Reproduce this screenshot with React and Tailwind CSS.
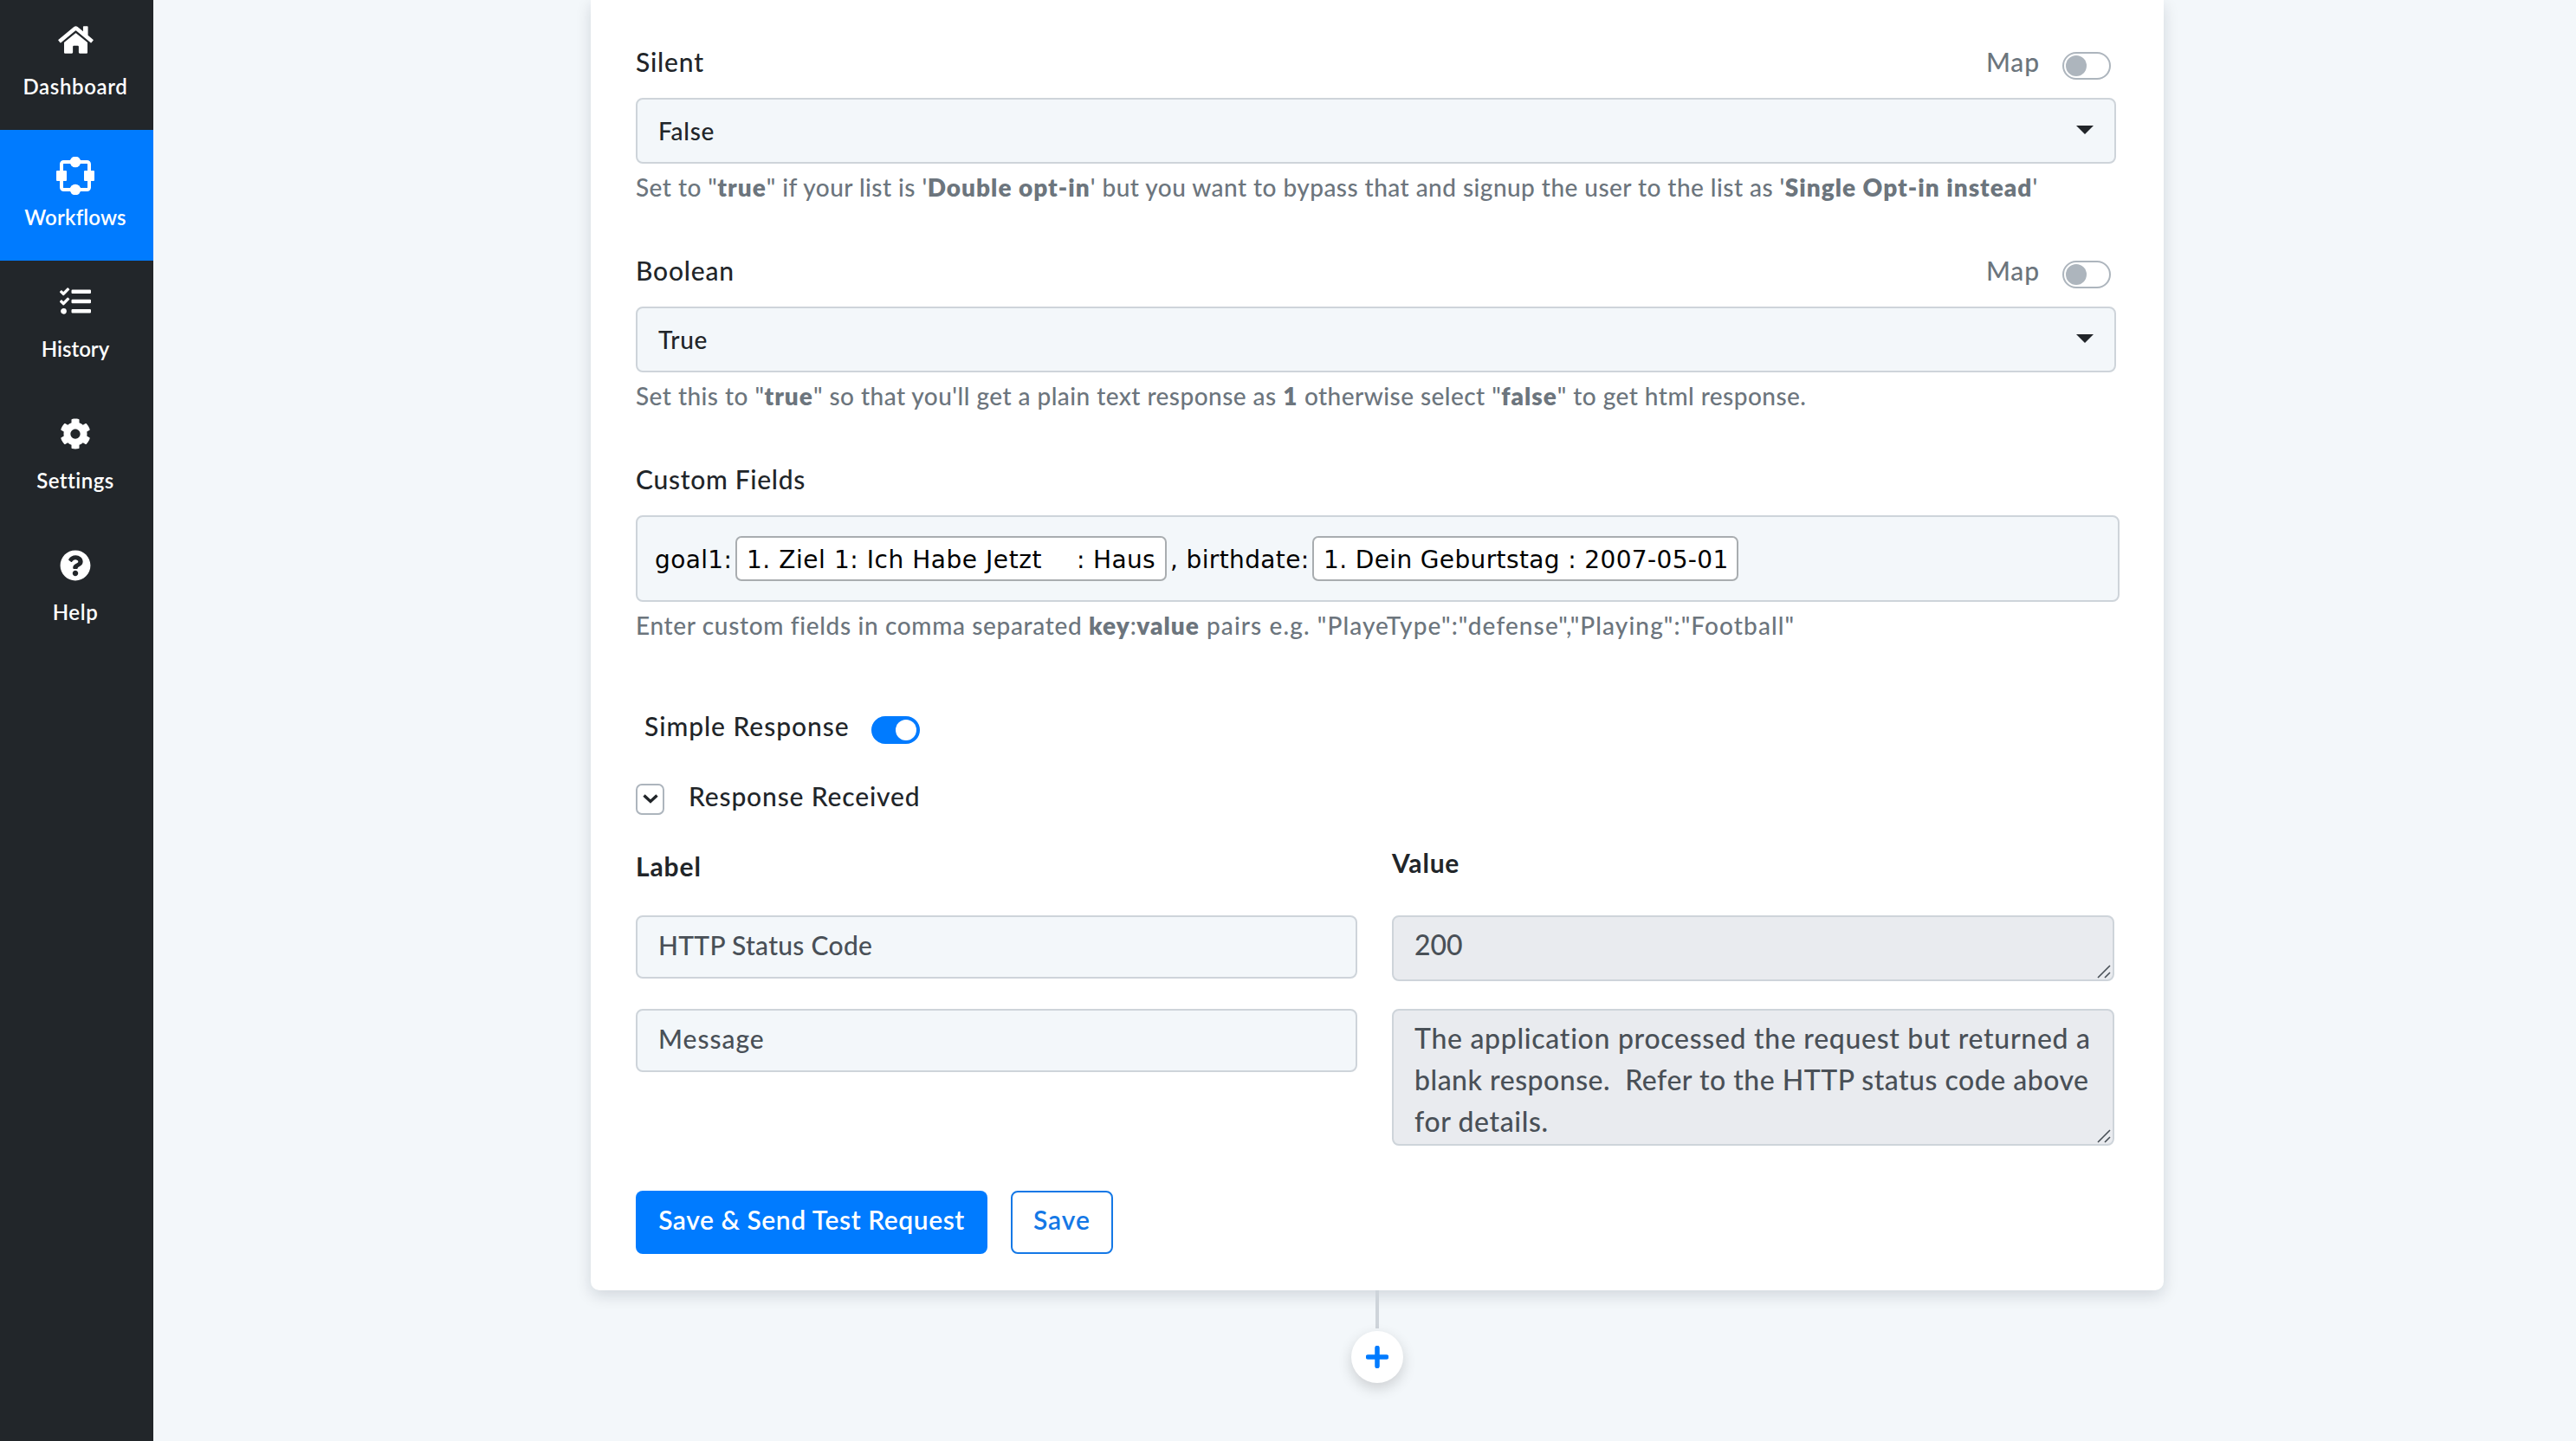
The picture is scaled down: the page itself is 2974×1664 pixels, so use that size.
import { FaHome, FaTasks, FaCog, FaQuestionCircle } from 'react-icons/fa';

const WorkflowIcon = () => (
  <svg viewBox="0 0 44 44" className="w-11 h-11" fill="currentColor">
    <rect x="6" y="6" width="32" height="32" rx="2.5" fill="none" stroke="currentColor" strokeWidth="4" />
    <rect x="0" y="16" width="12" height="12" rx="1" />
    <rect x="32" y="16" width="12" height="12" rx="1" />
    <circle cx="22" cy="6" r="6.3" />
    <circle cx="22" cy="38" r="6.3" />
  </svg>
);

const Sidebar = () => (
  <nav className="w-[177px] shrink-0 bg-[#22262a] text-white text-[24px] leading-[37px] font-semibold">
    <a className="flex flex-col items-center h-[150px] pt-7 pr-[3px] tracking-[0.65px]">
      <FaHome className="w-[41px] h-9 mb-[17px]" />
      Dashboard
    </a>
    <a className="flex flex-col items-center h-[151px] pt-[31px] pr-[3px] bg-[#007bff] tracking-[0.15px]">
      <span className="mb-[7px]"><WorkflowIcon /></span>
      Workflows
    </a>
    <a className="flex flex-col items-center h-[152px] pt-[29px] pr-[3px]">
      <FaTasks className="w-9 h-9 mb-[18px]" />
      History
    </a>
    <a className="flex flex-col items-center h-[152px] pt-[30px] pr-[3px] tracking-[0.5px]">
      <FaCog className="w-9 h-9 mb-[17px]" />
      Settings
    </a>
    <a className="flex flex-col items-center h-[152px] pt-[30px] pr-[3px] tracking-[0.6px]">
      <FaQuestionCircle className="w-9 h-9 mb-[17px]" />
      Help
    </a>
  </nav>
);

const Toggle = ({ on }) => (
  <span
    className={
      on
        ? 'flex justify-end w-14 h-8 mt-[10px] p-[2px] rounded-full border-2 border-[#007bff] bg-[#007bff]'
        : 'flex w-14 h-8 mt-[10px] p-[2px] rounded-full border-2 border-[#adb5bd] bg-white'
    }
  >
    <span className={on ? 'w-6 h-6 rounded-full bg-white' : 'w-6 h-6 rounded-full bg-[#adb5bd]'} />
  </span>
);

const SelectField = ({ label, value, children }) => (
  <div className="mb-[54px]">
    <div className="flex justify-between h-[42px] w-[1703px]">
      <label className="tracking-[0.8px]">{label}</label>
      <div className="flex gap-[26px] text-[#6c757d]">
        <span className="tracking-[0.9px]">Map</span>
        <Toggle />
      </div>
    </div>
    <div className="mt-[21px] flex items-center justify-between w-[1709px] h-[76px] pl-6 pr-6 rounded-lg border-2 border-[#ced4da] bg-[#f3f7fa] text-[28px] tracking-[0.7px]">
      {value}
      <svg viewBox="0 0 20 10" className="w-5 h-[10px] mb-[2px]" fill="#212529"><path d="M0 0h20L10 10z" /></svg>
    </div>
    <Help>{children}</Help>
  </div>
);

const Help = ({ children }) => (
  <p className="mt-[6px] h-[42px] text-[28px] leading-[43px] text-[#6c757d] whitespace-nowrap tracking-[0.45px]">{children}</p>
);

const B = ({ children }) => <b className="font-extrabold tracking-[1px]">{children}</b>;

const Chip = ({ className, children }) => (
  <span className={`flex justify-between h-[52px] pt-[5px] px-[11px] rounded-[7px] border-2 border-[#a9adb0] bg-white ${className}`}>{children}</span>
);

const TextInput = ({ className, children }) => (
  <div className={`h-[73px] pt-[11px] pl-6 rounded-lg border-2 border-[#ced4da] bg-[#f3f7fa] text-[#495057] ${className}`}>{children}</div>
);

const ResponseValue = ({ className, children }) => (
  <div className={`relative pt-2 pl-6 rounded-lg border-2 border-[#ced4da] bg-[#e9ebef] text-[#495057] text-[32px] leading-[48px] whitespace-pre ${className}`}>
    {children}
    <svg viewBox="0 0 16 16" className="absolute right-[2px] bottom-[1px] w-4 h-4" stroke="#495057" strokeWidth="1.6">
      <path d="M1 15L15 1M9 15l6-6" />
    </svg>
  </div>
);

export default function App() {
  return (
    <div className="flex w-[2974px] h-[1664px] overflow-hidden bg-[#f3f7fa] font-['Lato',sans-serif] font-medium text-[30px] leading-[42px] text-[#212529]">
      <Sidebar />
      <main className="ml-[505px] w-[1816px] flex flex-col items-center">
        <section className="w-full h-[1490px] pt-[50px] pl-[52px] rounded-b-[10px] bg-white shadow-[0_6px_18px_rgba(0,20,40,0.14)]">
          <SelectField label="Silent" value="False">
            Set to "<B>true</B>" if your list is '<B>Double opt-in</B>' but you want to bypass that and signup the user to the list as '<B>Single Opt-in instead</B>'
          </SelectField>
          <SelectField label="Boolean" value="True">
            Set this to "<B>true</B>" so that you'll get a plain text response as <B>1</B> otherwise select "<B>false</B>" to get html response.
          </SelectField>

          <div className="h-[42px] tracking-[0.7px]">Custom Fields</div>
          <div className="mt-[21px] flex items-center w-[1713px] h-[100px] pl-5 rounded-lg border-2 border-[#ced4da] bg-[#f3f7fa] font-['DejaVu_Sans',sans-serif] font-normal text-[28px] text-black tracking-[0.37px] whitespace-pre">
            <span className="w-[93px] pt-[3px]">goal1:</span>
            <Chip className="w-[498px]"><span className="tracking-[0.55px]">1. Ziel 1: Ich Habe Jetzt</span><span>: Haus</span></Chip>
            <span className="w-[168px] pt-[3px] pl-1">, birthdate:</span>
            <Chip className="w-[492px]">1. Dein Geburtstag : 2007-05-01</Chip>
          </div>
          <Help>
            <span className="tracking-[0.65px]">Enter custom fields in comma separated </span>
            <B>key</B>:<B>value</B>
            <span className="tracking-[1.1px]"> pairs e.g. "PlayeType":"defense","Playing":"Football"</span>
          </Help>

          <div className="mt-[74px] flex pl-[10px] h-[42px]">
            <span className="w-[262px] tracking-[0.95px]">Simple Response</span>
            <Toggle on />
          </div>

          <div className="mt-[39px] flex h-[43px]">
            <span className="mt-[7px] flex items-center justify-center w-[33px] h-9 rounded-[7px] border-2 border-[#adb5bd]">
              <svg viewBox="0 0 18 11" className="w-[18px] h-[11px] mb-[1px]" fill="none" stroke="#212529" strokeWidth="3.4"><path d="M1.5 1.5L9 8.5l7.5-7" /></svg>
            </span>
            <span className="ml-7 tracking-[0.85px]">Response Received</span>
          </div>

          <div className="mt-[34px] grid grid-cols-[833px_834px] gap-x-10">
            <div className="h-[82px] pt-1 font-bold tracking-[0.9px]">Label</div>
            <div className="h-[82px] font-bold tracking-[0.8px]">Value</div>
            <div className="h-[108px]"><TextInput className="tracking-[0.3px]">HTTP Status Code</TextInput></div>
            <div className="h-[108px]"><ResponseValue className="h-[76px]">200</ResponseValue></div>
            <TextInput className="tracking-[1px]">Message</TextInput>
            <ResponseValue className="h-[158px]">
              <div className="tracking-[0.7px]">The application processed the request but returned a</div>
              <div className="tracking-[0.5px]">{'blank response.  Refer to the HTTP status code above'}</div>
              <div className="tracking-[0.6px]">for details.</div>
            </ResponseValue>
          </div>

          <div className="mt-[52px] flex gap-[27px] font-semibold">
            <button className="w-[406px] h-[73px] pb-[7px] rounded-lg bg-[#007bff] text-white tracking-[0.55px]">Save &amp; Send Test Request</button>
            <button className="w-[118px] h-[73px] pb-[7px] rounded-lg border-2 border-[#1478e6] text-[#1478e6] tracking-[1px]">Save</button>
          </div>
        </section>
        <div className="w-1 h-11 bg-[#ced4da]" />
        <div className="mt-[3px] flex items-center justify-center w-[60px] h-[60px] rounded-full bg-white shadow-[0_6px_16px_rgba(0,0,0,0.16)]">
          <svg viewBox="0 0 26 26" className="w-[26px] h-[26px]" stroke="#007bff" strokeWidth="5.5" strokeLinecap="round"><path d="M13 2.5v21M2.5 13h21" /></svg>
        </div>
      </main>
    </div>
  );
}
